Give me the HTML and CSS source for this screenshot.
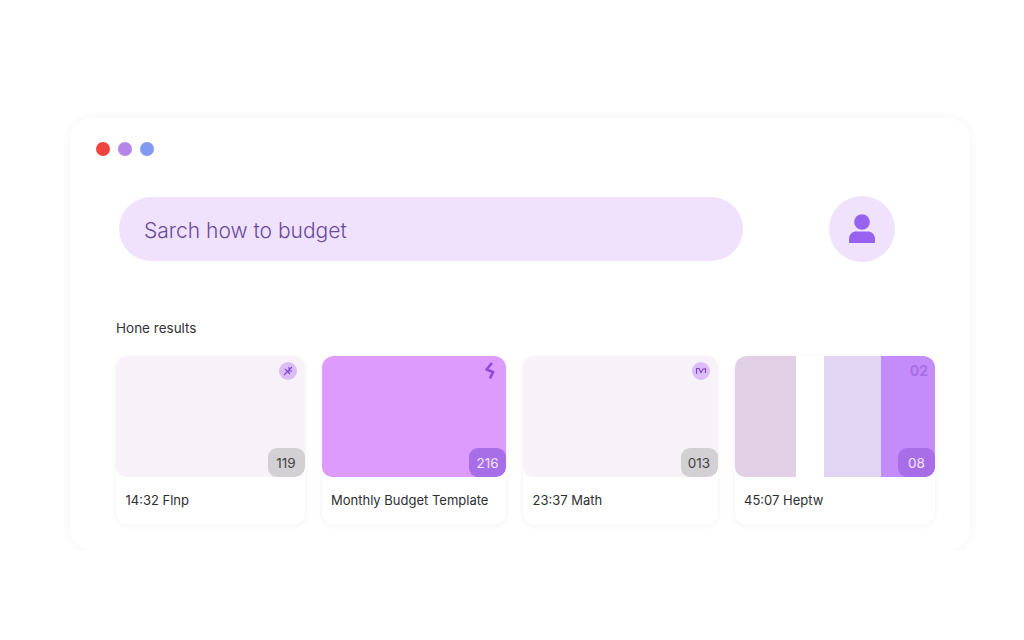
FILE: index.html
```html
<!DOCTYPE html>
<html lang="en">
<head>
    <meta charset="UTF-8">
    <title>Search how to budget</title>
    <link rel="stylesheet" href="styles.css">
</head>
<body>
    <div class="window">
        <div class="dots">
            <span class="dot dot-red"></span>
            <span class="dot dot-purple"></span>
            <span class="dot dot-blue"></span>
        </div>

        <div class="top-row">
            <div class="search">Sarch how to budget</div>
            <div class="avatar">
                <svg width="28" height="30" viewBox="0 0 28 30">
                    <circle cx="14" cy="8" r="7.8" fill="#9762ee"/>
                    <path d="M1 29V25C1 20 4.5 17.5 8.5 17.5H19.5C23.5 17.5 27 20 27 25V29H1Z" fill="#9762ee"/>
                </svg>
            </div>
        </div>

        <div class="section-title">Hone results</div>

        <div class="cards">
            <div class="card">
                <div class="thumb thumb-light">
                    <span class="corner-icon">
                        <svg width="12" height="12" viewBox="0 0 12 12"><path d="M2 10L10 2M3 4L8 9M7 2L7 6L10 6" fill="none" stroke="#7d45c9" stroke-width="1.1"/></svg>
                    </span>
                    <span class="count count-grey">119</span>
                </div>
                <div class="card-title">14:32 Flnp</div>
            </div>

            <div class="card">
                <div class="thumb thumb-purple">
                    <span class="corner-bare">
                        <svg width="12" height="18" viewBox="0 0 12 18"><path d="M8 1L2.5 7.5L9 10L6 16.5" fill="none" stroke="#9148dc" stroke-width="2.6" stroke-linejoin="round"/></svg>
                    </span>
                    <span class="count count-purple">216</span>
                </div>
                <div class="card-title">Monthly Budget Template</div>
            </div>

            <div class="card">
                <div class="thumb thumb-light">
                    <span class="corner-icon">
                        <svg width="12" height="12" viewBox="0 0 12 12"><path d="M1.5 3.5H4L6 7.5L8 4H10.5M1.5 3V9M10.5 3V8" fill="none" stroke="#7d45c9" stroke-width="1.1"/></svg>
                    </span>
                    <span class="count count-grey">013</span>
                </div>
                <div class="card-title">23:37 Math</div>
            </div>

            <div class="card">
                <div class="thumb thumb-bands">
                    <div class="band band-mauve"></div>
                    <div class="band band-white"></div>
                    <div class="band band-lilac"></div>
                    <div class="band band-violet"></div>
                    <span class="corner-num">02</span>
                    <span class="count count-purple">08</span>
                </div>
                <div class="card-title">45:07 Heptw</div>
            </div>
        </div>
    </div>
</body>
</html>
```

FILE: styles.css
```css
* {
    margin: 0;
    padding: 0;
    box-sizing: border-box;
}

body {
    background-color: #fff;
    font-family: Inter, "Liberation Sans", sans-serif;
    color: #2b2b30;
}

/* Main window */
.window {
    width: 900px;
    height: 432px;
    margin: 118px 0 0 70px;
    padding: 24px 35px 0 46px;
    background-color: #fff;
    border-radius: 22px;
    box-shadow: 0 0 10px rgba(90, 60, 130, 0.07);
}

.dots {
    display: flex;
    gap: 8px;
    margin-left: -20px;
}

.dot {
    width: 14px;
    height: 14px;
    border-radius: 50%;
}

.dot-red { background-color: #ef4440; }
.dot-purple { background-color: #b685e8; }
.dot-blue { background-color: #8199f0; }

/* Search row */
.top-row {
    display: flex;
    align-items: center;
    margin: 40px 0 0 3px;
}

.search {
    width: 624px;
    height: 64px;
    padding: 3px 0 0 25px;
    display: flex;
    align-items: center;
    background-color: #f0e2fd;
    border-radius: 32px;
    font-size: 21px;
    font-weight: 300;
    color: #6a4a9e;
}

.avatar {
    width: 66px;
    height: 66px;
    margin-left: 86px;
    display: flex;
    align-items: center;
    justify-content: center;
    background-color: #f0e2fd;
    border-radius: 50%;
}

.section-title {
    margin-top: 57px;
    font-size: 13.5px;
    line-height: 18px;
    color: #333338;
}

/* Cards */
.cards {
    display: grid;
    grid-template-columns: 188.5px 184.5px 194.5px 200.5px;
    gap: 17px;
    margin-top: 19px;
}

.card {
    height: 169px;
    background-color: #fff;
    border-radius: 12px;
    box-shadow: 0 1px 5px rgba(90, 60, 130, 0.08);
}

.thumb {
    position: relative;
    height: 121px;
    border-radius: 12px 12px 10px 10px;
    overflow: hidden;
}

.thumb-light { background-color: #f7f2f7; }
.thumb-purple { background-color: #dc9bfd; }

.thumb-bands {
    display: flex;
}

.band { height: 100%; }
.band-mauve { width: 61.5px; background-color: #e1d0e5; }
.band-white { width: 28px; background-color: #fff; }
.band-lilac { width: 57px; background-color: #e2d5f3; }
.band-violet { flex: 1; background-color: #c48cfb; }

.corner-icon {
    position: absolute;
    top: 6px;
    right: 8px;
    width: 18px;
    height: 18px;
    display: flex;
    align-items: center;
    justify-content: center;
    background-color: #dcbdf8;
    border-radius: 50%;
}

.corner-bare {
    position: absolute;
    top: 6px;
    right: 10px;
    display: flex;
}

.corner-num {
    position: absolute;
    top: 6px;
    right: 7px;
    font-size: 14px;
    line-height: 18px;
    font-weight: 700;
    color: #a96de6;
}

.count {
    position: absolute;
    right: 0;
    bottom: 0;
    width: 37px;
    height: 29px;
    display: flex;
    align-items: center;
    justify-content: center;
    border-radius: 9px;
    font-size: 13.5px;
}

.count-grey {
    background-color: #d2d0d2;
    color: #444;
}

.count-purple {
    background-color: #a76ee8;
    color: #f3e6fd;
}

.card-title {
    padding: 14px 0 0 9.5px;
    font-size: 13px;
    line-height: 18px;
    color: #2e2e32;
}
```
